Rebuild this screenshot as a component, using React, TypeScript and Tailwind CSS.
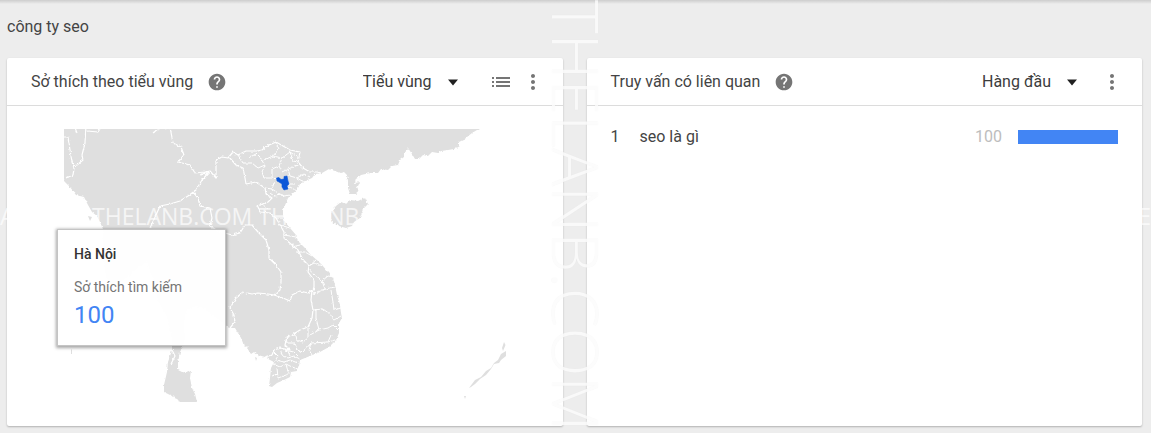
import React, { useState } from 'react';
import { MdHelp, MdList, MdMoreVert } from 'react-icons/md';

interface RelatedQuery {
  rank: number;
  query: string;
  value: number;
}

const queries: RelatedQuery[] = [{ rank: 1, query: 'seo là gì', value: 100 }];

// Land outlines
const land = [
  // mainland
  'M50 110H500L480 128L477 130L472 133L467 137L463 140L459 142L459 146L454 149L448 150L441 151L438 153L432 152L428 156L423 155L419 159L415 159L412 154L408 148L406 152L404 151L404 157L400 160L398 165L392 166L388 170L381 169L378 173L370 173L361 175L356 179L355 183L360 182L357 188L359 192L356 194L350 194L348 188L348 181L347 175L344 172L340 173L335 171L329 169L322 173L315 174L312 178L305 181L300 184L297 190L292 194L288 198L286 203L283 210L283 216L285 222L290 228L296 235L298 241L304 247L310 254L318 261L322 265L328 272L333 278L335 285L337 295L340 305L341 313L342 318L339 323L339 333L336 340L329 347L320 352L310 356L305 358L300 360L299 366L297 371L291 372L290 377L284 380L277 383L272 387L269 386L270 378L271 368L274 362L270 360L265 357L258 355L254 352L251 354L247 348L249 346L244 347L243 343L241 338L238 333L235 328L229 328L222 322L212 315L205 308L195 306L186 311L184 325L185 338L183 346L180 352L178 362L178 370L184 373L191 370L190 378L192 388L195 394L199 410L179 403L177 398L172 396L164 392L164 385L167 372L168 362L172 350L172 340L168 320L158 300L153 280L147 262L140 266L132 274L120 282L108 285L103 260L103 229L100 222L97 216L92 212L88 205L84 197L76 195L70 187L64 181L50 175Z',
  // Hainan
  'M331 212L336 206L341 202L346 204L350 200L358 201L362 199L365 198L368 204L363 209L360 218L354 222L352 226L346 228L339 226L333 223L331 218Z',
].join('');

const islands = [
  // Palawan
  'M469 388L472 384L475 380L481 377L486 371L491 368L494 363L498 360L501 354L506 351L506 356L501 360L499 363L494 364L491 369L486 375L480 379L475 384L471 387Z',
  'M504 342L505.5 345L503 351L502 348Z',
  'M464 396L466 396L465 399Z',
  // along the coast
  'M88 216L92 217L90 221Z',
  'M255 357L257 358L256 361Z',
  'M71 349L72 350L72 354L71 354Z',
].join('');

// Country borders
const countries = [
  'M64 137L68 137L70 150L72 162L74 168L73 175L66 178',
  'M86 125L85 143L82 155L83 160L77 165L73 166',
  'M74 125L77 133M87 131L98 132L100 129',
  'M153 133L158 129L170 127L173 143L181 147L184 155L178 162L190 165L195 173L205 172L210 171L202 180L196 190L188 196L180 201L170 204L160 206L156 215L150 228',
  'M193 192L198 198L200 206L210 208L212 218L210 226L218 231',
  'M200 175L210 171L216 178L216 160L222 157L228 158L233 152L238 155L246 151L257 151L262 150L267 146L276 142L283 146L290 150L300 152L298 162L303 168L310 172L317 172L321 173',
  'M229 157L236 165L243 168L245 178L246 184L256 182L265 188L266 194L272 198L268 202L257 206L260 212L270 213L276 218L280 225L284 232L284 238L292 245L298 250L303 260L309 266L308 272L314 280L314 287L312 293',
  'M218 231L232 235L240 233L245 225L252 225L258 232L266 240L269 250L269 258L276 265L281 272L281 282L280 290L274 295',
  'M230 328L235 322L234 315L230 308L236 298L243 292L252 294L258 293L268 294L274 295L283 298L290 301L292 295L300 291L308 293L312 290L311 300L313 310L312 318L308 327L300 330L292 335L287 337L285 345L290 350L280 348L274 350L272 355L265 357',
  'M172 350L175 356L171 364',
].join('');

// Province borders
const provinces = [
  'M238 155L243 163L252 163L258 168L265 165L262 172L264 178L272 178',
  'M255 152L260 157L264 164M248 158L256 154',
  'M276 143L279 149L273 156L264 160M273 156L282 158L290 152L293 161L298 162',
  'M282 158L279 166L282 172L288 169L290 176L297 178L304 182M279 166L272 169L272 178L277 179',
  'M290 152L296 156M288 169L298 165M297 178L304 174L310 177',
  'M265 188L272 189L274 183M272 189L278 193L284 196L290 195M270 193L274 196L283 195M284 190L290 187L297 191M288 184L295 184M262 204L268 209M276 218L283 218',
  'M280 225L290 228M284 235L296 237M292 247L300 245M296 252L305 252L312 256M300 256L309 266L316 260',
  'M309 266L314 263L322 266M308 268L314 275L322 281L328 276L334 277M322 281L325 289L335 287M325 289L313 294M331 290L333 302L334 310L341 308',
  'M313 310L323 309L330 314L334 320L341 316M316 309L316 318L319 330L310 335M319 330L328 328L333 325L338 330M311 343L328 342L331 335M328 342L335 340',
  'M295 332L297 340L303 342L308 338L308 328M295 343L297 350L303 352L311 343L309 350L312 355M286 337L287 343L295 343',
  'M272 350L278 356L274 362M280 348L282 355L288 358L294 356L300 359M288 351L290 356M276 360L284 362L290 360L298 363M273 364L280 367L286 364L292 367L298 369M277 368L278 378L286 375L291 372M278 374L272 376M286 364L288 372M284 350L294 352L298 356',
].join('');

const hanoi = 'M276.5 178L279 177.5L281 179.5L284 179L284 176.5L287 176L288 181L289 184L287 186L288 189L284 190L282 187L282 184L279 182L277 181Z';

const RegionMap: React.FC = () => (
  <svg viewBox="64 129 442 273" className="block w-full" role="img" aria-label="Hà Nội">
    <defs>
      <filter id="coast" x="-5%" y="-5%" width="110%" height="110%">
        <feTurbulence type="fractalNoise" baseFrequency="0.35" numOctaves="2" seed="4" />
        <feDisplacementMap in="SourceGraphic" scale="3" xChannelSelector="R" yChannelSelector="G" />
      </filter>
    </defs>
    <g filter="url(#coast)">
      <path d={land} fill="#dfdfdf" />
      <path d={countries} fill="none" stroke="#fff" strokeWidth="1.2" strokeLinejoin="round" />
      <path d={provinces} fill="none" stroke="#fff" strokeWidth="1" strokeLinejoin="round" />
    </g>
    <path d={islands} fill="#dfdfdf" />
    <path d={hanoi} fill="#0b57d8" stroke="#0b57d8" strokeWidth="0.6" strokeLinejoin="round" />
  </svg>
);

interface HeaderSelectProps {
  label: string;
  options: string[];
}

const HeaderSelect: React.FC<HeaderSelectProps> = ({ label, options }) => {
  const [value, setValue] = useState(options[0]);

  return (
    <div className="relative flex items-center">
      <select
        aria-label={label}
        value={value}
        onChange={(e) => setValue(e.target.value)}
        className="w-[102px] cursor-pointer appearance-none bg-transparent text-base text-[#3c3c3c] outline-none"
      >
        {options.map(o => <option key={o}>{o}</option>)}
      </select>
      <svg viewBox="0 0 24 24" className="pointer-events-none absolute right-0 h-6 w-6" aria-hidden="true">
        <path d="M7 9.5h10l-5 6z" fill="#212121" />
      </svg>
    </div>
  );
};

interface CardProps {
  title: string;
  controls: React.ReactNode;
  children: React.ReactNode;
}

const Card: React.FC<CardProps> = ({ title, controls, children }) => (
  <section className="min-w-0 flex-1 rounded-xs bg-white shadow-[0_1px_2px_rgba(0,0,0,0.25)]">
    <header className="flex h-12 items-center justify-between border-b border-[#dcdcdc] pr-[18px] pl-6">
      <div className="flex items-center gap-3.5">
        <h2 className="text-base text-[#444]">{title}</h2>
        <button type="button" aria-label={`${title} ?`} className="text-[#757575]">
          <MdHelp className="h-5 w-5" />
        </button>
      </div>
      <div className="flex items-center">{controls}</div>
    </header>
    {children}
  </section>
);

const MoreButton: React.FC = () => (
  <button type="button" aria-label="Menu" className="text-[#757575]">
    <MdMoreVert className="h-6 w-6" />
  </button>
);

const App: React.FC = () => {
  return (
    <div className="relative min-h-screen overflow-hidden bg-[#ededed] pr-[9px] pb-1.5 pl-[7px] font-[Roboto,sans-serif]">
      <div className="absolute inset-x-0 top-0 h-1 bg-linear-to-b from-[#cdcdcd] to-[#ededed]" />
      <h1 className="pt-[15px] pb-[19px] text-base text-[#444]">công ty seo</h1>

      <main className="flex gap-6">
        <Card
          title="Sở thích theo tiểu vùng"
          controls={
            <>
              <HeaderSelect label="Khu vực" options={['Tiểu vùng', 'Thành phố']} />
              <button type="button" aria-label="Danh sách" className="mr-2 ml-6 text-[#757575]">
                <MdList className="h-6 w-6" />
              </button>
              <MoreButton />
            </>
          }
        >
          <div className="relative pt-[23px] pb-6">
            <div className="mx-auto w-full max-w-[442px]">
              <RegionMap />
            </div>
            <div className="absolute top-[123px] left-[50px] z-20 w-[169px] border border-[#c4c4c4] bg-white/95 px-4 pt-3.5 pb-3.5 shadow-[0_1px_3px_1px_rgba(0,0,0,0.35)]">
              <p className="text-sm font-medium text-[#333]">Hà Nội</p>
              <p className="mt-[13px] text-sm text-[#757575]">Sở thích tìm kiếm</p>
              <p className="mt-0.5 text-2xl text-[#4285f4]">100</p>
            </div>
          </div>
        </Card>

        <Card
          title="Truy vấn có liên quan"
          controls={
            <>
              <HeaderSelect label="Truy vấn" options={['Hàng đầu', 'Tăng']} />
              <span className="w-4" />
              <MoreButton />
            </>
          }
        >
          <ol className="px-6 pt-[19px]">
            {queries.map(q => (
              <li key={q.rank} className="flex items-center text-base text-[#444]">
                <span className="w-[29px]">{q.rank}</span>
                <a href="#" className="flex-1">{q.query}</a>
                <span className="mr-4 text-[#bdbdbd]">{q.value}</span>
                <div className="h-3.5 w-[100px]">
                  <div className="h-full bg-[#4285f4]" style={{ width: `${q.value}%` }} />
                </div>
              </li>
            ))}
          </ol>
        </Card>
      </main>

      {/* watermark */}
      <div
        aria-hidden="true"
        className="pointer-events-none absolute inset-x-0 top-[200px] z-10 flex justify-between text-[23px] leading-8 whitespace-nowrap text-white/70 font-['Open_Sans',sans-serif]"
      >
        <span className="w-[92px]">A</span>
        <span className="flex-1">THELANB.COM THELANB</span>
        <span>E</span>
      </div>
      <div
        aria-hidden="true"
        className="pointer-events-none absolute top-0 left-[536px] z-10 text-[64px] leading-[80px] font-light whitespace-nowrap text-white/80 [writing-mode:vertical-rl] [text-shadow:0_0_1px_rgba(0,0,0,0.06)] font-['Open_Sans',sans-serif]"
      >
        THELANB.COM
      </div>
    </div>
  );
};

export default App;
